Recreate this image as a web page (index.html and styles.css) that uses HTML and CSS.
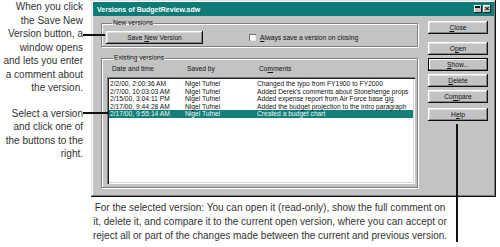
FILE: index.html
```html
<!DOCTYPE html>
<html lang="en">
<head>
  <meta charset="UTF-8">
  <title>Versions dialog</title>
  <link rel="stylesheet" href="styles.css">
</head>
<body>
  <div class="figure">
    <div class="top">
      <div class="notes">
        <p class="note">When you click<br>the Save New<br>Version button, a<br>window opens<br>and lets you enter<br>a comment about<br>the version.</p>
        <p class="note note-select">Select a version<br>and click one of<br>the buttons to the<br>right.</p>
      </div>

      <div class="dialog">
        <div class="titlebar">
          <span class="title">Versions of BudgetReview.sdw</span>
          <span class="tbtn tbtn-help"></span>
          <span class="tbtn tbtn-close">&#215;</span>
        </div>
        <div class="dlg-body">
          <div class="groups">
            <fieldset class="group group-new">
              <legend>New versions</legend>
              <button class="btn btn-save">Save <u>N</u>ew Version</button>
              <label class="check"><span class="box"></span><u>A</u>lways save a version on closing</label>
            </fieldset>
            <fieldset class="group group-existing">
              <legend>Existing versions</legend>
              <div class="cols cols-head"><span>Date and time</span><span>Saved by</span><span>Co<u>m</u>ments</span></div>
              <div class="listbox">
                <div class="cols row"><span>2/2/00, 2:00:36 AM</span><span>Nigel Tufnel</span><span>Changed the typo from FY1900 to FY2000</span></div>
                <div class="cols row"><span>2/7/00, 10:03:03 AM</span><span>Nigel Tufnel</span><span>Added Derek's comments about Stonehenge props</span></div>
                <div class="cols row"><span>2/15/00, 3:04:11 PM</span><span>Nigel Tufnel</span><span>Added expense report from Air Force base gig</span></div>
                <div class="cols row"><span>2/17/00, 9:44:28 AM</span><span>Nigel Tufnel</span><span>Added the budget projection to the intro paragraph</span></div>
                <div class="cols row selected"><span>2/17/00, 9:55:14 AM</span><span>Nigel Tufnel</span><span>Created a budget chart</span></div>
              </div>
            </fieldset>
          </div>
          <div class="actions">
            <button class="btn"><u>C</u>lose</button>
            <button class="btn btn-open">O<u>p</u>en</button>
            <button class="btn btn-default"><u>S</u>how...</button>
            <button class="btn"><u>D</u>elete</button>
            <button class="btn">Co<u>m</u>pare</button>
            <button class="btn btn-help">H<u>e</u>lp</button>
          </div>
        </div>
      </div>
    </div>

    <p class="caption">For the selected version: You can open it (read-only), show the full comment on<br>it, delete it, and compare it to the current open version, where you can accept or<br>reject all or part of the changes made between the current and previous version.</p>

    <span class="leader leader-save"></span>
    <span class="leader leader-select"></span>
    <span class="leader leader-help"></span>
  </div>
</body>
</html>
```

FILE: styles.css
```css
* {
  box-sizing: border-box;
}

body {
  margin: 0;
  background: #fff;
  font-family: "Liberation Sans", Arial, sans-serif;
}

.figure {
  position: relative;
  width: 500px;
  height: 247px;
}

.top {
  display: flex;
  gap: 8px;
  height: 197px;
}

/* callout text on the left */
.notes {
  width: 83px;
  flex: none;
}
.note {
  margin: 0;
  font-size: 10px;
  line-height: 13.5px;
  text-align: right;
  color: #333;
}
.note-select {
  margin-top: 12px;
}

/* the dialog window */
.dialog {
  width: 405px;
  height: 197px;
  background: #c3c3c3;
  padding: 2px;
  box-shadow: inset -1px -1px #111, inset 1px 1px #e0e0e0, inset -2px -2px #7f7f7f, inset 2px 2px #fff;
  font-size: 6.7px;
  color: #111;
}

.titlebar {
  display: flex;
  align-items: center;
  height: 14px;
  padding: 0 3px 0 4px;
  background: #0e7b78;
}
.title {
  flex: 1;
  color: #fff;
  font-weight: bold;
  font-size: 7px;
}
.tbtn {
  width: 8px;
  height: 8px;
  background: #c3c3c3;
  box-shadow: inset -1px -1px #222, inset 1px 1px #fff;
  font-size: 8px;
  line-height: 8px;
  text-align: center;
  font-weight: bold;
  color: #000;
}
.tbtn-help {
  margin-right: 1px;
}
.tbtn-help::before {
  content: "";
  display: block;
  margin: 1px 2px 0 1px;
  height: 2px;
  background: #111;
}

.dlg-body {
  display: grid;
  grid-template-columns: 317px 60px;
  column-gap: 10px;
  padding: 3px 6px 0 8px;
}

/* group boxes */
.group {
  margin: 0;
  border: 1px solid #808080;
  box-shadow: 1px 1px #fff, inset 1px 1px #fff;
  min-width: 0;
}
.group legend {
  margin-left: 6px;
  padding: 0 1px;
  font-size: 6.7px;
  line-height: 8px;
}
.group-new {
  height: 28px;
  padding: 1px 4px 0 4px;
  display: flex;
  align-items: center;
}
.group-existing {
  height: 134px;
  margin-top: 7px;
  padding: 3px 2px 0 5px;
}

.btn {
  display: block;
  height: 13px;
  padding: 0;
  border: 0;
  background: #c3c3c3;
  box-shadow: inset -1px -1px #111, inset 1px 1px #fff, inset -2px -2px #858585, inset 2px 2px #dedede;
  font-family: inherit;
  font-size: 6.7px;
  color: #111;
  text-align: center;
}
.btn-save {
  width: 97px;
  flex: none;
}

.check {
  display: flex;
  align-items: center;
  margin-left: 46px;
  font-size: 6.7px;
}
.check .box {
  width: 7px;
  height: 7px;
  margin-right: 4px;
  background: #fff;
  box-shadow: inset 1px 1px #6f6f6f, inset -1px -1px #e8e8e8;
}

/* list of versions */
.cols {
  display: grid;
  grid-template-columns: 75px 72px 1fr;
  white-space: nowrap;
}
.cols-head {
  line-height: 8px;
  padding-left: 5px;
}
.listbox {
  height: 107px;
  margin-top: 4px;
  padding: 3px 2px 0 2px;
  background: #fff;
  box-shadow: inset 1px 1px #7a7a7a, inset 2px 2px #1c1c1c, inset -1px -1px #fff, inset -2px -2px #d6d6d6;
}
.row {
  height: 7.5px;
  line-height: 7.5px;
  padding-left: 1px;
}
.row.selected {
  background: #127f7b;
  color: #eef8f2;
}

/* right hand buttons */
.actions {
  display: flex;
  flex-direction: column;
  gap: 3px;
  padding-top: 2px;
}
.btn-open {
  margin-top: 5px;
}
.btn-default {
  box-shadow: inset 0 0 0 1px #000, inset -2px -2px #858585, inset 2px 2px #fff;
}
.btn-help {
  margin-top: 2px;
}

/* bottom caption */
.caption {
  width: 400px;
  margin: 4px 0 0 70px;
  font-size: 10px;
  line-height: 14px;
  text-align: center;
  white-space: nowrap;
  color: #333;
}

/* callout leader lines drawn over the picture */
.leader {
  position: absolute;
  background: #111;
}
.leader-save {
  left: 83px;
  top: 34px;
  width: 22px;
  height: 2px;
}
.leader-select {
  left: 83px;
  top: 112px;
  width: 25px;
  height: 2px;
}
.leader-help {
  left: 456px;
  top: 124px;
  width: 2px;
  height: 118px;
}
```
